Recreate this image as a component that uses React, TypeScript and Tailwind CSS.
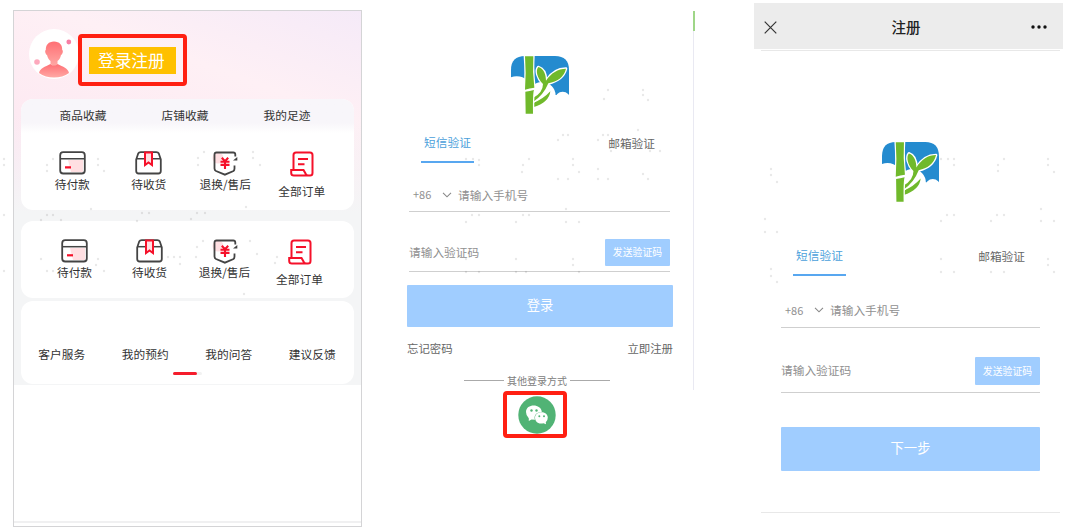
import clsx from "clsx";

const DOTS: [number, number][] = [
  // account screen
  [4, 159], [4, 165], [47, 171], [53, 159], [47, 165], [98, 159], [98, 165], [104, 171],
  [198, 158], [198, 165], [204, 152], [253, 152], [253, 158], [260, 165], [4, 215], [91, 209],
  [47, 215], [53, 215], [142, 213], [149, 213], [191, 219], [197, 213], [205, 213], [246, 207],
  [4, 271], [41, 220], [61, 220], [137, 221], [47, 271], [41, 259], [53, 271], [98, 259],
  [96, 265], [104, 271], [168, 257], [174, 257], [180, 257], [180, 264], [197, 247], [203, 241],
  [196, 257], [250, 241], [257, 254], [275, 263], [277, 257], [244, 294],
  // login screen
  [604, 99], [608, 90], [643, 90], [643, 95], [648, 100], [638, 130], [558, 140], [563, 135],
  [568, 135], [598, 140], [603, 135], [608, 135], [611, 151], [650, 151], [660, 151], [466, 159],
  [473, 159], [479, 160], [479, 165], [529, 159], [523, 165], [522, 172], [573, 159], [573, 165],
  [579, 172], [558, 179], [568, 179], [598, 169], [598, 179], [608, 179], [643, 174], [648, 179],
  [472, 215], [479, 215], [466, 222], [523, 215], [529, 215], [516, 222], [566, 209], [566, 222],
  [579, 222], [466, 259], [516, 259], [573, 259], [573, 265], [466, 272], [479, 272], [516, 272],
  [526, 272], [579, 272],
  // register screen
  [771, 169], [771, 175], [777, 182], [941, 159], [948, 159], [954, 159], [954, 165], [1004, 159],
  [998, 165], [998, 171], [1048, 159], [1048, 165], [1054, 172], [765, 219], [765, 232], [777, 232],
  [941, 221], [947, 215], [954, 215], [991, 221], [997, 215], [1004, 215], [1041, 209], [1041, 221],
  [1054, 221], [771, 269], [771, 276], [777, 282], [941, 259], [941, 272], [954, 272], [991, 272],
  [1004, 272], [1048, 259], [1048, 265], [1054, 272],
];

function DotTexture() {
  return (
    <svg className="absolute left-0 top-0 pointer-events-none" width="1091" height="531">
      {DOTS.map(([x, y], i) => (
        <circle key={i} cx={x} cy={y} r="1.2" fill="#000" opacity="0.09" />
      ))}
    </svg>
  );
}

function Avatar() {
  return (
    <svg className="block h-[50px] w-[50px]" viewBox="0 0 50 50">
      <defs>
        <linearGradient id="person" x1="0" y1="0" x2="0" y2="1">
          <stop offset="0" stopColor="#ff6f74" />
          <stop offset="1" stopColor="#ffa9a5" />
        </linearGradient>
      </defs>
      <circle cx="25" cy="25" r="25" fill="#fff" />
      <g fill="url(#person)">
        <path d="M25 12.500C19.500 12.500 16.700 16 16.800 21C15.500 21.500 16.500 25.500 18 26C18.700 29 20 31 21.500 32V35C25 38 26 38 28.500 35V32C30.200 31 31.400 29 32 26C33.700 25.500 34.500 21.500 33.200 21C33.500 16 30.500 12.500 25 12.500Z" />
        <path d="M10 44C11 39 16 38 21.500 35C23.500 37 26.500 37 28.500 35C34 38 39 39 40 44C32 50 18 50 10 44Z" />
      </g>
      <circle cx="39.800" cy="13" r="2.400" fill="#f77fa5" />
      <circle cx="8" cy="33" r="2.800" fill="#fda9bd" />
    </svg>
  );
}

function CardIcon() {
  return (
    <svg className="block" width="27" height="24" viewBox="0 0 27 24" fill="none">
      <path d="M9 9H24V21H12Z" fill="#ffdfe2" />
      <rect x="1.200" y="1.200" width="24.600" height="21.300" rx="3" stroke="#444" strokeWidth="1.800" />
      <path d="M1.500 7.700H25.500" stroke="#444" strokeWidth="1.500" />
      <path d="M6 16.300H12" stroke="#f5112a" strokeWidth="2.200" />
    </svg>
  );
}

function BoxIcon() {
  return (
    <svg className="block" width="27" height="24" viewBox="0 0 27 24" fill="none">
      <path
        d="M1.200 8.500L3.200 2.500Q3.900 1.200 5.700 1.200H21.300Q23.100 1.200 23.800 2.500L25.800 8.500V20Q25.800 22.500 23.300 22.500H3.700Q1.200 22.500 1.200 20Z"
        stroke="#444"
        strokeWidth="1.800"
      />
      <path d="M1.500 7.700H25.500" stroke="#444" strokeWidth="1.500" />
      <path d="M10 1.500H17V14L13.500 11.500L10 14Z" fill="#ffdfe2" stroke="#f5112a" strokeWidth="2" />
    </svg>
  );
}

function RefundIcon() {
  return (
    <svg className="block" width="26" height="25" viewBox="0 0 26 25" fill="none">
      <circle cx="6" cy="7" r="5.500" fill="#ffdfe2" />
      <path
        d="M23.300 5.500V3.500Q23.300 1.500 21.300 1.500H4.500Q2.500 1.500 2.500 3.500V17.500Q2.500 19.200 4 20L12.900 23.700L21.500 20Q22.500 19.300 22.500 17.500V14.500"
        stroke="#444"
        strokeWidth="1.800"
      />
      <path d="M21 9.500L25.300 6V9.500Z" fill="#444" />
      <path d="M9.800 6.800L13 10.300L16.200 6.800M8.500 10.700H17.500M8.500 13.900H17.500M13 10.300V18" stroke="#f5112a" strokeWidth="2.100" />
    </svg>
  );
}

function OrdersIcon() {
  return (
    <svg className="block" width="24" height="26" viewBox="0 0 24 26" fill="none">
      <path
        d="M3.500 18V4Q3.500 1.500 6 1.500H20Q22.500 1.500 22.500 4V22Q22.500 24.500 20 24.500H4Q1.200 24.500 1.200 22V19H13.500L15.500 22.500Q16 24.500 18.500 24.500"
        stroke="#f5112a"
        strokeWidth="2"
      />
      <path d="M8 8H18M8 13.300H14.500" stroke="#f5112a" strokeWidth="1.900" />
    </svg>
  );
}

function BambooLogo({ id, className }: { id: string; className: string }) {
  return (
    <svg className={clsx("block", className)} viewBox="0 0 174 174" preserveAspectRatio="none">
      <clipPath id={id}>
        <path d="M0 174V42Q0 0 42 0H132Q174 0 174 42V174Z" />
      </clipPath>
      <g clipPath={`url(#${id})`}>
        <path d="M0 0H174V125H0Z" fill="#248bcf" />
        <g fill="#fff">
          <rect y="117" width="176" height="59" />
          <circle cx="17" cy="107" r="46" />
          <circle cx="93" cy="119" r="41" />
          <circle cx="155" cy="130" r="23" />
        </g>
      </g>
      <g fill="#70b92b" stroke="#fff" strokeWidth="8" strokeLinejoin="round" paintOrder="stroke">
        <path d="M42 1H67Q64 48 70 95Q56 96 42 101Q46 50 42 1Z" />
        <path d="M66 154V141Q96 130 118 106Q115 139 66 154Z" />
        <path d="M66 126Q96 110 96 84C78 66 73 43 82 33C99 38 105 57 105 74C120 51 141 38 165 38C158 65 139 76 112 82Q98 117 66 138Z" />
        <path d="M43 107Q56 106 69 102Q65 112 66 173H44Z" />
      </g>
    </svg>
  );
}

function WechatIcon() {
  return (
    <svg className="block" width="38" height="38" viewBox="0 0 38 38">
      <circle cx="19" cy="19" r="18.700" fill="#51b375" />
      <path d="M8 16C8 7 23.500 7.500 23.800 16C18 16 15.500 20 17 23.800L13.500 23.500L10.800 25V22.300Q8 19.800 8 16Z" fill="#fff" />
      <path d="M17 21.500C17.500 14.500 29.500 14.500 29.800 21.500Q29.800 24.500 27.800 26.200L28 28.300L25.500 27.200C20 28.500 17 25.500 17 21.500Z" fill="#fff" />
      <g fill="#51b375">
        <circle cx="13.500" cy="14.500" r="1.200" />
        <circle cx="18.500" cy="14.500" r="1.200" />
        <circle cx="21.300" cy="20.200" r="1" />
        <circle cx="26" cy="20.200" r="1" />
      </g>
    </svg>
  );
}

function OrderRow({ className }: { className: string }) {
  return (
    <div className={clsx("grid grid-cols-4 text-center", className)}>
      <div className="flex flex-col items-center">
        <CardIcon />
        <span className="-mt-px leading-5">待付款</span>
      </div>
      <div className="flex flex-col items-center">
        <BoxIcon />
        <span className="-mt-px leading-5">待收货</span>
      </div>
      <div className="flex flex-col items-center">
        <RefundIcon />
        <span className="-mt-0.5 leading-5 whitespace-nowrap">退换/售后</span>
      </div>
      <div className="flex flex-col items-center">
        <OrdersIcon />
        <span className="mt-1 leading-5">全部订单</span>
      </div>
    </div>
  );
}

function AccountScreen() {
  return (
    <section className="ml-[13px] mt-2.5 flex h-[517px] w-[349px] shrink-0 flex-col border border-[#d4d4d6] bg-white text-[11.7px] text-[#333]">
      <div className="h-[374px] bg-[linear-gradient(180deg,transparent_28%,#f4f5f6_54%),linear-gradient(200deg,#f5eaf8_0%,#fef0f5_22%,#fdeaf2_45%,#fbe6f2_60%)] px-[7px]">
        <div className="flex h-[88px] pl-2">
          <div className="mt-[18px] h-[50px] w-[49px]">
            <Avatar />
          </div>
          <div className="mt-[23px] flex h-[52px] w-[109px] items-center justify-center rounded border-4 border-[#ff2012]">
            <div className="h-[27px] w-[87px] bg-[#ffc000] pl-[9px] text-[16.7px] leading-[27px] text-white">
              登录注册
            </div>
          </div>
        </div>
        <div className="h-[111px] overflow-hidden rounded-xl bg-white">
          <div className="grid h-[34px] grid-cols-3 bg-linear-to-b from-[#f8f6fa] from-70% to-white pl-[11px] pr-4 text-center leading-[31px]">
            <span>商品收藏</span>
            <span>店铺收藏</span>
            <span>我的足迹</span>
          </div>
          <OrderRow className="pl-[13px] pr-3.5 pt-[18px]" />
        </div>
        <div className="mt-[11px] h-[77px] rounded-xl bg-white">
          <OrderRow className="pl-[16px] pr-[17px] pt-[18px]" />
        </div>
        <div className="mt-[3px] h-[83px] rounded-xl bg-white pt-[43px]">
          <div className="-ml-px grid grid-cols-4 text-center leading-5">
            <span>客户服务</span>
            <span>我的预约</span>
            <span>我的问答</span>
            <span>建议反馈</span>
          </div>
          <div className="ml-[152px] mt-2 flex h-[3px] w-[29px] rounded-full bg-[#f2f2f2]">
            <div className="w-6 rounded-full bg-[#f51d2c]" />
          </div>
        </div>
      </div>
      <div className="mt-auto h-[5px] border-t-2 border-[#f0f0f1]" />
    </section>
  );
}

function Chevron() {
  return (
    <svg className="ml-[9px] mr-[6px]" width="10" height="6" viewBox="0 0 10 6" fill="none">
      <path d="M1 0.800L5 4.800L9 0.800" stroke="#888" strokeWidth="1.100" />
    </svg>
  );
}

function VerifyTabs({ className }: { className: string }) {
  return (
    <div className={clsx("flex items-start justify-between", className)}>
      <div className="h-[30px] w-[53px] border-b-2 border-[#58a7f0] text-center leading-[18px] text-[#4b9fdb]">
        短信验证
      </div>
      <div className="leading-5 text-[#666]">邮箱验证</div>
    </div>
  );
}

function PhoneField({ className }: { className: string }) {
  return (
    <div className={clsx("flex items-center border-b border-[#cfcfcf] pl-1 text-[#909090]", className)}>
      <span className="w-5 text-[11px]">+86</span>
      <Chevron />
      <span>请输入手机号</span>
    </div>
  );
}

function CodeField({ className, button }: { className: string; button: string }) {
  return (
    <div className={clsx("flex items-start justify-between border-b border-[#cfcfcf] text-[#909090]", className)}>
      <span className="leading-[26px]">请输入验证码</span>
      <button className={clsx("w-[65px] rounded-[1px] bg-[#a0cdff] text-[9.9px] text-white", button)}>
        发送验证码
      </button>
    </div>
  );
}

function LoginScreen() {
  return (
    <section className="flex w-[333px] shrink-0 flex-col pl-[45px] text-[11.7px]">
      <BambooLogo id="logo-login" className="ml-[104px] mt-14 h-[58px] w-[58px]" />
      <VerifyTabs className="ml-3.5 mr-10 mt-[19px]" />
      <PhoneField className="ml-0.5 mr-[25px] mt-4 h-[33px] pb-px" />
      <CodeField className="ml-0.5 mr-[25px] mt-[27px] h-[33px]" button="h-[27px]" />
      <button className="mt-[13px] h-[42px] w-[266px] rounded-[1px] bg-[#a0cdff] pb-0.5 text-[13.3px] text-white">
        登录
      </button>
      <div className="mt-[11px] flex w-[266px] justify-between text-[11.4px] leading-5 text-[#666]">
        <span>忘记密码</span>
        <span>立即注册</span>
      </div>
      <div className="ml-[57px] mt-[13px] flex h-[18px] w-[146px] items-center justify-between text-[10px] text-[#808080]">
        <span className="h-px w-10 bg-[#aaa]" />
        <span>其他登录方式</span>
        <span className="h-px w-10 bg-[#aaa]" />
      </div>
      <div className="ml-24 mt-0.5 flex h-[47px] w-[64px] items-center justify-center rounded border-4 border-[#ff2012] bg-white pl-1">
        <WechatIcon />
      </div>
    </section>
  );
}

function RegisterScreen() {
  return (
    <section className="ml-[59px] flex w-[310px] shrink-0 flex-col pt-[3px] text-[11.7px]">
      <header className="flex h-[46px] w-[309px] items-center justify-between bg-[#ececec] pl-[10px] pr-4 pt-[2px]">
        <svg width="13" height="13" viewBox="0 0 13 13">
          <path d="M0.700 0.700L12.300 12.300M12.300 0.700L0.700 12.300" stroke="#333" strokeWidth="1.200" />
        </svg>
        <h1 className="pl-1 text-[14.5px] font-medium text-[#222]">注册</h1>
        <svg width="16" height="4" viewBox="0 0 16 4" fill="#111">
          <circle cx="2" cy="2" r="1.700" />
          <circle cx="8" cy="2" r="1.700" />
          <circle cx="14" cy="2" r="1.700" />
        </svg>
      </header>
      <div className="ml-[7px] mt-px h-[463px] w-[299px] border-y border-[#e8e8e8] px-5">
        <BambooLogo id="logo-register" className="ml-[101px] mt-[91px] h-[60px] w-[57px]" />
        <VerifyTabs className="ml-3 mr-[15px] mt-11" />
        <PhoneField className="mt-[17px] h-[35px]" />
        <CodeField className="mt-[29px] h-9" button="h-[28px]" />
        <button className="mt-[34px] h-11 w-full rounded-[1px] bg-[#a0cdff] pb-0.5 text-[13.3px] text-white">
          下一步
        </button>
      </div>
    </section>
  );
}

export default function App() {
  return (
    <main className="relative flex h-[531px] w-[1091px] overflow-hidden bg-white font-['Noto_Sans_CJK_SC',sans-serif]">
      <AccountScreen />
      <LoginScreen />
      {/* right edge of the login view */}
      <div className="-ml-[2px] mt-[11px] h-[379px] w-[2px] shrink-0 border-l border-[#e9e9f2]">
        <div className="-ml-px h-5 w-[2px] bg-[#9fd688]" />
      </div>
      <RegisterScreen />
      <DotTexture />
    </main>
  );
}
